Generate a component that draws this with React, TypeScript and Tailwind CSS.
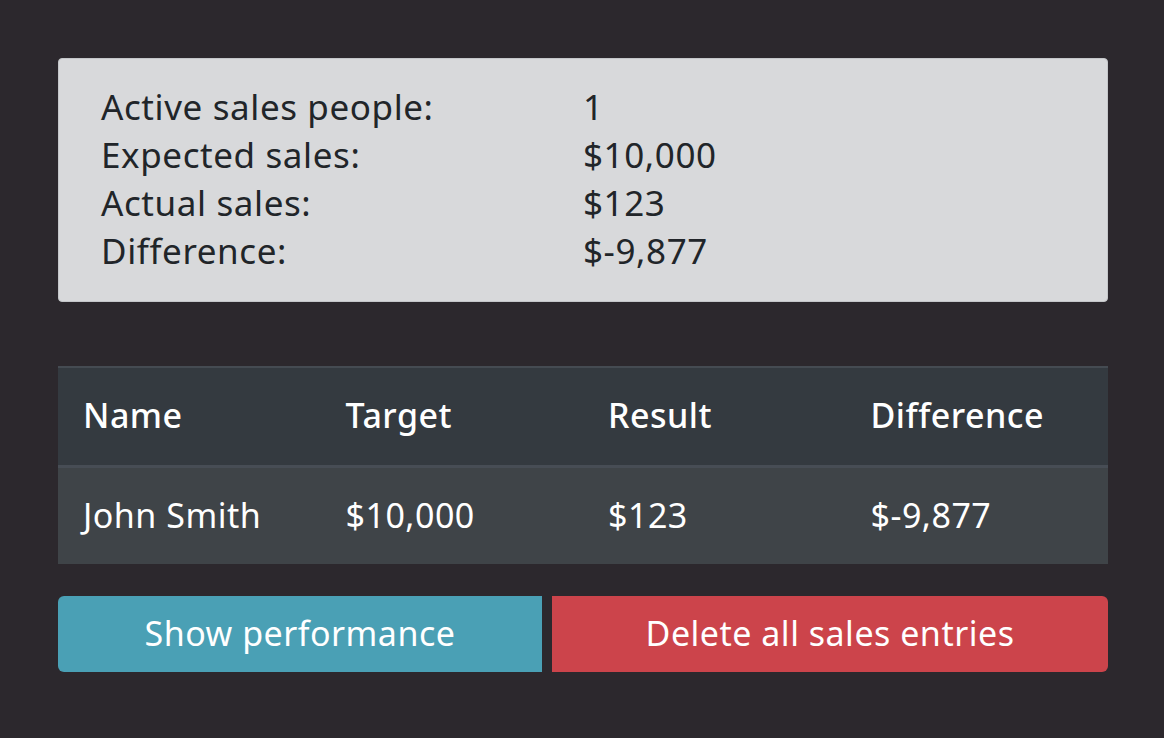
import React from "react";

export default function App() {
  const stats = [
    ["Active sales people:", "1"],
    ["Expected sales:", "$10,000"],
    ["Actual sales:", "$123"],
    ["Difference:", "$-9,877"],
  ];
  return (
    <div
      className="w-[1164px] h-[738px] bg-[#2c282d] pl-[58px] pr-[56px] pt-[58px]"
      style={{ fontFamily: '"Noto Sans", "Open Sans", sans-serif' }}
    >
      <div className="bg-[#d8d9db] border border-[#c4c6c9] rounded-[4px] h-[244px] pl-[42px] pt-[24px]">
        {stats.map(([k, v]) => (
          <div key={k} className="flex h-[48px] items-center text-[35px] tracking-[0.6px] text-[#212529]">
            <div className="w-[482px]">{k}</div>
            <div>{v}</div>
          </div>
        ))}
      </div>

      <div className="mt-[64px] border-t-2 border-[#454b52]">
        <div className="grid grid-cols-4 bg-[#343a40] h-[97px] pb-[2px] items-center text-white text-[34px] tracking-[0.5px] font-medium">
          <div className="pl-[25px]">Name</div>
          <div className="pl-[25px]">Target</div>
          <div className="pl-[25px]">Result</div>
          <div className="pl-[25px]">Difference</div>
        </div>
        <div className="grid grid-cols-4 bg-[#3f4448] border-t-[3px] border-[#474d55] h-[99px] pb-[2px] items-center text-white text-[34px] tracking-[0.5px]">
          <div className="pl-[25px]">John Smith</div>
          <div className="pl-[25px]">$10,000</div>
          <div className="pl-[25px]">$123</div>
          <div className="pl-[25px]">$-9,877</div>
        </div>
      </div>

      <div className="flex gap-[10px] mt-[32px]">
        <button className="w-[484px] h-[76px] pb-[2px] bg-[#4aa0b5] text-white text-[34px] tracking-[0.5px] rounded-l-[6px]">
          Show performance
        </button>
        <button className="flex-1 h-[76px] pb-[2px] bg-[#cc444b] text-white text-[34px] tracking-[0.5px] rounded-r-[6px]">
          Delete all sales entries
        </button>
      </div>
    </div>
  );
}
